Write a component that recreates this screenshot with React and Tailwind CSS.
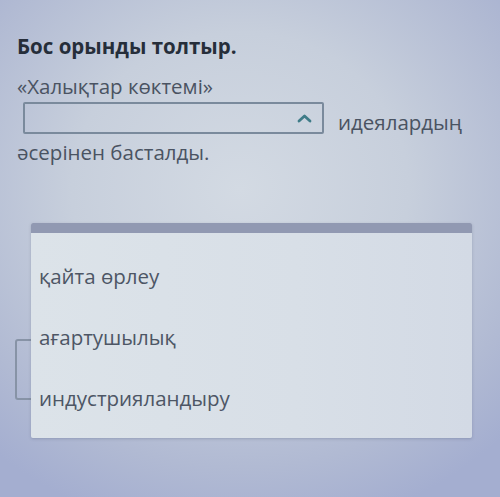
import React from "react";

const options = ["қайта өрлеу", "ағартушылық", "индустрияландыру"];

export default function App() {
  return (
    <div
      className="relative w-[500px] h-[497px] overflow-hidden bg-[radial-gradient(ellipse_75%_70%_at_48%_38%,#d3dae3_0%,#c7cfdc_45%,#b1bad3_80%,#a4aed0_100%)] text-[#3f4856]"
      style={{ fontFamily: '"Open Sans", "Noto Sans", sans-serif' }}
    >
      <div className="pl-[17px] pt-[32px]">
        <h1 className="text-[20.5px] leading-[28px] font-bold text-[#262e3a]">
          Бос орынды толтыр.
        </h1>
        <p className="mt-[12px] text-[20.5px] leading-[28px] text-[#4a5362]">
          «Халықтар көктемі»
        </p>
        <div className="flex items-start mt-[2px]">
          <div className="ml-[6px] w-[301px] h-[32px] border-2 border-[#7a8a9c] rounded-[2px] flex items-center justify-end pr-[10px]">
            <svg width="15" height="10" viewBox="0 0 15 10" fill="none">
              <path d="M2 8 L7.5 3 L13 8" stroke="#3f7c88" strokeWidth="2.8" strokeLinecap="round" strokeLinejoin="round" />
            </svg>
          </div>
          <span className="ml-[14px] mt-[6px] text-[20.5px] leading-[28px] text-[#4a5362]">идеялардың</span>
        </div>
        <p className="mt-[2px] text-[20.5px] leading-[28px] text-[#4a5362]">әсерінен басталды.</p>
        <div className="mt-[173px] ml-[-2px] w-[200px] h-[61px] border-2 border-[#8793a6] rounded-[3px]" />
      </div>

      <div className="absolute left-[31px] top-[223px] w-[441px] h-[215px] bg-[linear-gradient(90deg,#dce3e9_0%,#d8dfe7_60%,#d3dae5_100%)] rounded-[2px] shadow-[0_1px_3px_rgba(60,70,100,0.25)] overflow-hidden">
        <div className="h-[10px] bg-[#9199b2]" />
        <ul className="pt-[29px] pl-[8px] flex flex-col gap-[33px]">
          {options.map((o) => (
            <li key={o} className="text-[20.5px] leading-[28px] text-[#4d5665]">
              {o}
            </li>
          ))}
        </ul>
      </div>
    </div>
  );
}
